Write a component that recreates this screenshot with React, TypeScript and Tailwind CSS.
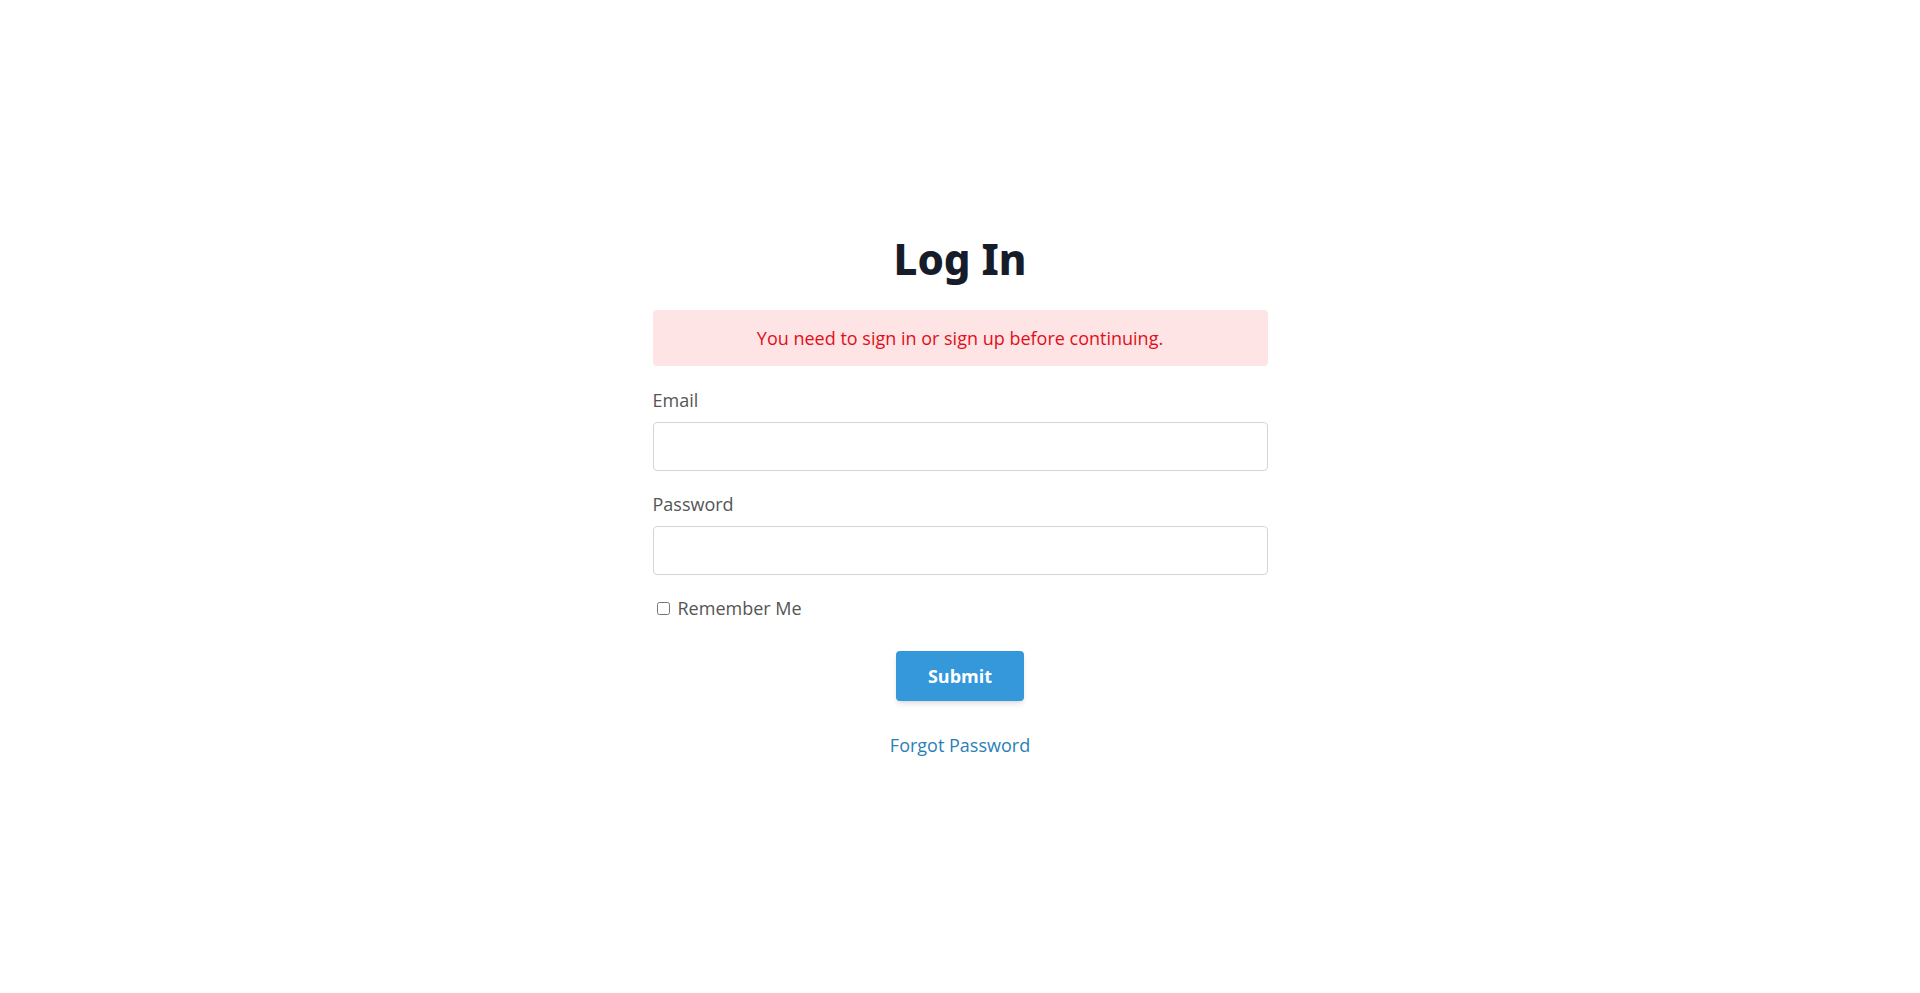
export default function App() {
  return (
    <div className="min-h-screen bg-white flex justify-center pt-[238px] font-['Open_Sans',sans-serif]">
      <div className="w-[615px] flex flex-col">
        <h1 className="text-center text-[42px] leading-none font-extrabold text-[#171c2b] mb-[30px] font-['Noto_Sans',sans-serif]">
          Log In
        </h1>

        <div className="h-[56px] mb-[21px] rounded bg-[#fee4e4] flex items-center justify-center text-lg leading-[27px] text-[#e10f1b]">
          You need to sign in or sign up before continuing.
        </div>

        <form onSubmit={(e) => e.preventDefault()} className="flex flex-col">
          <label htmlFor="email" className="text-lg leading-[27px] text-[#555555] mb-2">
            Email
          </label>
          <input
            id="email"
            type="email"
            className="h-[49px] mb-5 px-3 rounded border border-[#d6d6d6] text-lg outline-none"
          />

          <label htmlFor="password" className="text-lg leading-[27px] text-[#555555] mb-2">
            Password
          </label>
          <input
            id="password"
            type="password"
            className="h-[49px] mb-5 px-3 rounded border border-[#d6d6d6] text-lg outline-none"
          />

          <label className="flex items-center gap-2 h-[27px] text-lg leading-[27px] text-[#555555]">
            <input type="checkbox" className="ml-1 w-[13px] h-[13px]" />
            Remember Me
          </label>

          <div className="flex justify-center mt-[29px]">
            <button
              type="submit"
              className="h-[50px] px-8 rounded bg-[#3498db] text-white text-lg font-bold shadow-md"
            >
              Submit
            </button>
          </div>

          <div className="flex justify-center mt-[31px]">
            <a href="#" className="text-lg leading-[27px] text-[#2a7fb8]">
              Forgot Password
            </a>
          </div>
        </form>
      </div>
    </div>
  );
}
